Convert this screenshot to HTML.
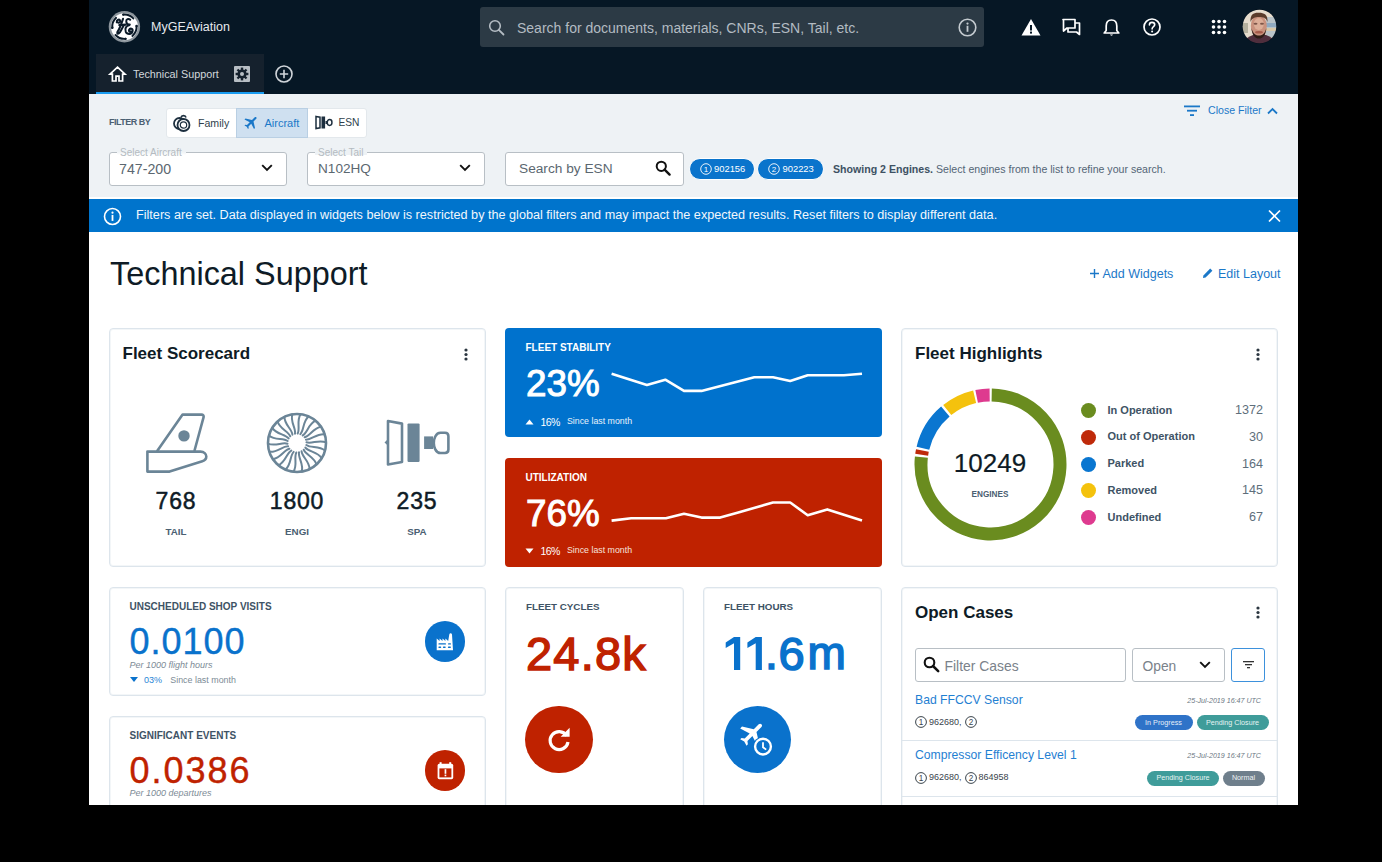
<!DOCTYPE html>
<html><head><meta charset="utf-8">
<style>
*{box-sizing:border-box;margin:0;padding:0}
html,body{width:1382px;height:862px;background:#000;overflow:hidden}
body{font-family:"Liberation Sans",sans-serif;position:relative}
.a{position:absolute;white-space:nowrap;line-height:1}
svg{position:absolute;overflow:visible}
.bg{position:absolute}
.ci{display:inline-block;width:11.5px;height:11.5px;border:1px solid #26323c;border-radius:50%;font-size:8.5px;line-height:9.5px;text-align:center;margin-right:1px;vertical-align:-2px}
.card{position:absolute;background:#fff;border:1px solid #dde5ec;border-radius:4px;box-shadow:inset 0 0 0 1px #f3f6f8}
</style></head>
<body>
<!-- backgrounds -->
<div class="bg" style="left:89px;top:0;width:1209px;height:805px;background:#fff"></div>
<div class="bg" style="left:89px;top:0;width:1209px;height:94px;background:#061725"></div>
<div class="bg" style="left:89px;top:94px;width:1209px;height:103px;background:#eef2f5"></div>
<div class="bg" style="left:89px;top:199px;width:1209px;height:33px;background:#0074cc"></div>

<!-- HEADER -->
<!-- GE logo -->
<svg style="left:104px;top:7px" width="40" height="40" viewBox="0 0 862 862">
<circle cx="440" cy="425" r="338" fill="#8d969d"/>
<circle cx="440" cy="425" r="290" fill="#fff"/>
<path d="M417 164 A262 262 0 0 1 632 246" stroke="#0b1a28" stroke-width="42" fill="none" stroke-linecap="round"/><circle cx="417" cy="164" r="26" fill="#0b1a28"/><path d="M702 411 A262 262 0 0 1 612 623" stroke="#0b1a28" stroke-width="42" fill="none" stroke-linecap="round"/><circle cx="702" cy="411" r="26" fill="#0b1a28"/><path d="M463 686 A262 262 0 0 1 248 604" stroke="#0b1a28" stroke-width="42" fill="none" stroke-linecap="round"/><circle cx="463" cy="686" r="26" fill="#0b1a28"/><path d="M179 448 A262 262 0 0 1 261 233" stroke="#0b1a28" stroke-width="42" fill="none" stroke-linecap="round"/><circle cx="179" cy="448" r="26" fill="#0b1a28"/>
<g fill="none" stroke="#0b1a28" stroke-width="44" stroke-linecap="round">
<path d="M275 330 C270 280 320 255 345 290 C365 320 330 350 300 330"/>
<path d="M410 255 C385 330 340 460 300 520 C265 575 300 600 345 540 C380 490 410 420 430 390"/>
<path d="M330 390 C380 385 420 385 470 380"/>
<path d="M565 275 C530 240 470 260 480 320 C490 370 530 380 555 378"/>
<path d="M545 392 C470 400 445 470 470 535 C495 595 600 600 615 525 C630 460 560 450 540 495 C528 525 555 545 575 525"/>
</g>
</svg>
<div class="a" id="myge" style="left:151px;top:21px;font-size:12.5px;color:#e6eaee">MyGEAviation</div>

<!-- search -->
<div class="bg" style="left:480px;top:7px;width:504px;height:40px;border-radius:3px;background:#2c3a45"></div>
<svg style="left:488px;top:19px" width="18" height="18" viewBox="0 0 18 18"><circle cx="7" cy="7" r="5.3" fill="none" stroke="#b4bcc3" stroke-width="1.6"/><line x1="10.8" y1="10.8" x2="15.5" y2="15.5" stroke="#b4bcc3" stroke-width="1.8" stroke-linecap="round"/></svg>
<div class="a" style="left:517px;top:21px;font-size:14px;color:#b3bbc2">Search for documents, materials, CNRs, ESN, Tail, etc.</div>
<svg style="left:958px;top:18px" width="19" height="19" viewBox="0 0 19 19"><circle cx="9.5" cy="9.5" r="8.3" fill="none" stroke="#c4cacf" stroke-width="1.6"/><circle cx="9.5" cy="5.6" r="1.1" fill="#c4cacf"/><rect x="8.6" y="7.8" width="1.8" height="6" fill="#c4cacf"/></svg>

<!-- right icons -->
<svg style="left:1021px;top:18px" width="20" height="18" viewBox="0 0 20 18"><path d="M10 1 L19.5 17.5 L0.5 17.5 Z" fill="#fff"/><rect x="9" y="7" width="2" height="5.5" fill="#061725"/><rect x="9" y="13.6" width="2" height="2" fill="#061725"/></svg>
<svg style="left:1062px;top:18px" width="19" height="18" viewBox="0 0 19 18"><path d="M1 1.5 H13 V10 H5 L1.5 13 V1.5 Z" fill="none" stroke="#fff" stroke-width="1.7" stroke-linejoin="round"/><path d="M13 5 H17.5 V16.5 L14.5 14 H6 V10" fill="none" stroke="#fff" stroke-width="1.7" stroke-linejoin="round"/></svg>
<svg style="left:1103px;top:18px" width="17" height="19" viewBox="0 0 17 19"><path d="M8.5 2 C5 2 3.2 4.6 3.2 8 V12.5 L1.2 15 H15.8 L13.8 12.5 V8 C13.8 4.6 12 2 8.5 2 Z" fill="none" stroke="#fff" stroke-width="1.7" stroke-linejoin="round"/><path d="M7 16.6 a1.6 1.6 0 0 0 3 0" fill="#fff"/></svg>
<svg style="left:1143px;top:18px" width="18" height="18" viewBox="0 0 18 18"><circle cx="9" cy="9" r="8" fill="none" stroke="#fff" stroke-width="1.7"/><path d="M6.4 7 C6.4 5.3 7.6 4.4 9 4.4 C10.5 4.4 11.7 5.4 11.7 6.8 C11.7 8.6 9.1 8.8 9.1 10.9" fill="none" stroke="#fff" stroke-width="1.6" stroke-linecap="round"/><circle cx="9.1" cy="13.4" r="1" fill="#fff"/></svg>
<svg style="left:1211px;top:19px" width="16" height="16" viewBox="0 0 16 16"><g fill="#fff"><circle cx="2.5" cy="2.5" r="1.8"/><circle cx="8" cy="2.5" r="1.8"/><circle cx="13.5" cy="2.5" r="1.8"/><circle cx="2.5" cy="8" r="1.8"/><circle cx="8" cy="8" r="1.8"/><circle cx="13.5" cy="8" r="1.8"/><circle cx="2.5" cy="13.5" r="1.8"/><circle cx="8" cy="13.5" r="1.8"/><circle cx="13.5" cy="13.5" r="1.8"/></g></svg>
<!-- avatar -->
<svg style="left:1242px;top:9.2px" width="35" height="35" viewBox="0 0 35 35">
 <defs><clipPath id="avc"><circle cx="17.5" cy="17.5" r="16.8"/></clipPath><filter id="avb" x="-20%" y="-20%" width="140%" height="140%"><feGaussianBlur stdDeviation="0.45"/></filter></defs>
 <circle cx="17.5" cy="17.5" r="17.3" fill="#02101c"/>
 <g clip-path="url(#avc)"><g filter="url(#avb)">
  <rect x="-2" y="-2" width="39" height="39" fill="#e6dccd"/>
  <rect x="24" y="8" width="13" height="20" fill="#b9c3c8"/>
  <rect x="24" y="14" width="13" height="4" fill="#8fa9c0"/>
  <rect x="24" y="19" width="13" height="3" fill="#d8c7a8"/>
  <rect x="1" y="14" width="5" height="10" fill="#b5b09e"/>
  <ellipse cx="17.5" cy="38" rx="17" ry="13" fill="#4f2f3c"/>
  <ellipse cx="16.8" cy="17" rx="8" ry="11" fill="#c9917d"/>
  <ellipse cx="16.8" cy="15" rx="5" ry="6" fill="#dcae98"/>
  <path d="M8.5 13 C8 5 12 3.5 17 3.8 C22 3.8 26 5.5 25.5 13 C24 8.5 21 8 17 8 C13 8 10 9 8.5 13Z" fill="#5a3a2c"/>
  <ellipse cx="13.5" cy="14.8" rx="2" ry="1" fill="#7d5548"/>
  <ellipse cx="20" cy="14.8" rx="2" ry="1" fill="#7d5548"/>
  <path d="M9.5 19 C10 27 13.5 29.5 17 29.5 C20.5 29.5 24 27 24.3 19 C23 25 20 26.5 17 26.5 C14 26.5 11 25 9.5 19Z" fill="#2e1d18"/>
  <ellipse cx="17" cy="23.3" rx="4" ry="1.3" fill="#a55a4a"/>
 </g></g>
</svg>

<!-- tab row -->
<div class="bg" style="left:96px;top:54px;width:168px;height:40px;background:#15212d"></div>
<div class="bg" style="left:96px;top:91.5px;width:168px;height:2.5px;background:#1a9cf0"></div>
<svg style="left:109px;top:66px" width="17" height="16" viewBox="0 0 17 16"><path d="M8.5 1.2 L16 8.2 H13.6 V15 H10 V10.2 H7 V15 H3.4 V8.2 H1 Z" fill="none" stroke="#fff" stroke-width="1.7" stroke-linejoin="miter"/></svg>
<div class="a" style="left:133px;top:69px;font-size:10.8px;color:#d3d8dc">Technical Support</div>
<svg style="left:234px;top:66px" width="16" height="16" viewBox="0 0 16 16"><rect x="0" y="0" width="16" height="16" rx="1" fill="#b8bec4"/><g transform="translate(8 8)"><circle r="4.6" fill="#15212d"/><g fill="#15212d"><rect x="-1.2" y="-6.4" width="2.4" height="12.8"/><rect x="-6.4" y="-1.2" width="12.8" height="2.4"/><rect x="-1.2" y="-6.4" width="2.4" height="12.8" transform="rotate(45)"/><rect x="-6.4" y="-1.2" width="12.8" height="2.4" transform="rotate(45)"/></g><circle r="2" fill="#b8bec4"/></g></svg>
<svg style="left:275px;top:65px" width="18" height="18" viewBox="0 0 18 18"><circle cx="9" cy="9" r="8" fill="none" stroke="#d0d5da" stroke-width="1.6"/><path d="M9 4.8 V13.2 M4.8 9 H13.2" stroke="#d0d5da" stroke-width="1.6"/></svg>


<!-- FILTER BAR -->
<div class="a" style="left:109px;top:118px;font-size:9px;font-weight:700;color:#4b6072;letter-spacing:-0.5px">FILTER BY</div>
<div class="bg" style="left:166px;top:107.5px;width:201px;height:30px;background:#fff;border:1px solid #e3e8ec;border-radius:3px"></div>
<div class="bg" style="left:236px;top:107.5px;width:72px;height:30px;background:#cfe0f0;border:1px solid #b9cfe3"></div>
<!-- family icon -->
<svg style="left:173px;top:113px" width="18" height="20" viewBox="0 0 18 20"><circle cx="6.5" cy="10.5" r="5.5" fill="none" stroke="#1d2f3f" stroke-width="1.8"/><circle cx="10.5" cy="12" r="6" fill="#fff" stroke="#1d2f3f" stroke-width="1.8"/><circle cx="10.5" cy="12" r="3.2" fill="none" stroke="#1d2f3f" stroke-width="1.2"/><path d="M8 4.5 C8.5 2 12.5 2 13 4.5" fill="none" stroke="#1d2f3f" stroke-width="1.6"/></svg>
<div class="a" style="left:198px;top:118px;font-size:10.6px;color:#2f3f4c">Family</div>
<!-- plane icon -->
<svg style="left:242.5px;top:113.5px" width="17" height="17" viewBox="0 0 24 24"><path fill="#1b78c8" d="M21 16v-2l-8-5V3.5c0-.83-.67-1.5-1.5-1.5S10 2.67 10 3.5V9l-8 5v2l8-2.5V19l-2 1.5V22l3.5-1 3.5 1v-1.5L13 19v-5.5l8 2.5z" transform="rotate(45 12 12)"/></svg>
<div class="a" style="left:264.5px;top:118px;font-size:11px;color:#1b78c8">Aircraft</div>
<!-- esn icon -->
<svg style="left:315px;top:115px" width="18" height="15" viewBox="0 0 18 15"><path d="M1 1.5 L5 2.2 V12.8 L1 13.5 Z" fill="none" stroke="#1d2f3f" stroke-width="1.5"/><rect x="6.5" y="1.5" width="3.6" height="12" fill="#1d2f3f"/><rect x="10.5" y="6" width="2" height="3" fill="#1d2f3f"/><rect x="12.3" y="4.6" width="4.6" height="5.8" rx="2.3" fill="none" stroke="#1d2f3f" stroke-width="1.5"/></svg>
<div class="a" style="left:338.5px;top:118px;font-size:10.2px;color:#2f3f4c">ESN</div>

<!-- close filter -->
<svg style="left:1184px;top:105px" width="16" height="12" viewBox="0 0 16 12"><rect x="0" y="0.5" width="16" height="1.8" fill="#1b78c8"/><rect x="3" y="4.8" width="10" height="1.8" fill="#1b78c8"/><rect x="6" y="9.2" width="4" height="1.8" fill="#1b78c8"/></svg>
<div class="a" style="left:1208px;top:105px;font-size:10.6px;color:#1b78c8">Close Filter</div>
<svg style="left:1267px;top:107px" width="11" height="8" viewBox="0 0 11 8"><path d="M1 6.5 L5.5 2 L10 6.5" fill="none" stroke="#1b78c8" stroke-width="1.8"/></svg>

<!-- selects -->
<div class="bg" style="left:109px;top:152px;width:178px;height:34px;background:#fff;border:1px solid #b8bfc5;border-radius:3px"></div>
<div class="bg" style="left:117px;top:147px;width:69px;height:8px;background:#eef2f5"></div>
<div class="bg" style="left:117px;top:152px;width:69px;height:3px;background:linear-gradient(#eef2f5,#fff)"></div>
<div class="a" style="left:120px;top:148px;font-size:10px;color:#b4bbc1">Select Aircraft</div>
<div class="a" style="left:119px;top:162px;font-size:14.2px;color:#5b6770">747-200</div>
<svg style="left:261px;top:164px" width="12" height="8" viewBox="0 0 12 8"><path d="M1.2 1.2 L6 6 L10.8 1.2" fill="none" stroke="#111" stroke-width="1.9"/></svg>

<div class="bg" style="left:307px;top:152px;width:178px;height:34px;background:#fff;border:1px solid #b8bfc5;border-radius:3px"></div>
<div class="bg" style="left:315px;top:147px;width:52px;height:8px;background:#eef2f5"></div>
<div class="a" style="left:318px;top:148px;font-size:10px;color:#b4bbc1">Select Tail</div>
<div class="a" style="left:318px;top:162px;font-size:13.6px;color:#5b6770">N102HQ</div>
<svg style="left:459px;top:164px" width="12" height="8" viewBox="0 0 12 8"><path d="M1.2 1.2 L6 6 L10.8 1.2" fill="none" stroke="#111" stroke-width="1.9"/></svg>

<!-- esn search -->
<div class="bg" style="left:505px;top:152px;width:179px;height:34px;background:#fff;border:1px solid #b8bfc5;border-radius:3px"></div>
<div class="a" style="left:519px;top:162px;font-size:13.7px;color:#5b6770">Search by ESN</div>
<svg style="left:655px;top:160px" width="16" height="16" viewBox="0 0 16 16"><circle cx="6.3" cy="6.3" r="4.6" fill="none" stroke="#111" stroke-width="2"/><line x1="9.6" y1="9.6" x2="14.6" y2="14.6" stroke="#111" stroke-width="2.4" stroke-linecap="round"/></svg>

<!-- chips -->
<div class="bg" style="left:689px;top:157.5px;width:66px;height:22px;border-radius:11px;background:#0a74cc;border:1px solid #fff"></div>
<svg style="left:700px;top:163px" width="12" height="12" viewBox="0 0 12 12"><circle cx="6" cy="6" r="5.3" fill="none" stroke="#fff" stroke-width="0.9"/><text x="6" y="9" font-size="8" text-anchor="middle" fill="#fff" font-family="Liberation Sans">1</text></svg>
<div class="a" style="left:714px;top:163.8px;font-size:9.4px;color:#fff">902156</div>
<div class="bg" style="left:757px;top:157.5px;width:67px;height:22px;border-radius:11px;background:#0a74cc;border:1px solid #fff"></div>
<svg style="left:768px;top:163px" width="12" height="12" viewBox="0 0 12 12"><circle cx="6" cy="6" r="5.3" fill="none" stroke="#fff" stroke-width="0.9"/><text x="6" y="9" font-size="8" text-anchor="middle" fill="#fff" font-family="Liberation Sans">2</text></svg>
<div class="a" style="left:782.5px;top:163.8px;font-size:9.4px;color:#fff">902223</div>

<div class="a" style="left:833px;top:163.5px;font-size:10.6px;color:#3d5163"><b style="font-weight:700">Showing 2 Engines.</b> <span style="color:#536575">Select engines from the list to refine your search.</span></div>

<!-- BANNER -->
<svg style="left:103px;top:207px" width="19" height="19" viewBox="0 0 19 19"><circle cx="9.5" cy="9.5" r="8" fill="none" stroke="#fff" stroke-width="1.6"/><circle cx="9.5" cy="5.7" r="1.1" fill="#fff"/><rect x="8.6" y="7.9" width="1.8" height="6" fill="#fff"/></svg>
<div class="a" style="left:136px;top:209px;font-size:12.65px;color:#f2f7fc">Filters are set. Data displayed in widgets below is restricted by the global filters and may impact the expected results. Reset filters to display different data.</div>
<svg style="left:1267px;top:209px" width="14" height="14" viewBox="0 0 14 14"><path d="M2 1.5 L13 12.5 M13 1.5 L2 12.5" stroke="#fff" stroke-width="1.7"/></svg>

<!-- TITLE -->
<div class="a" style="left:110px;top:258px;font-size:32.4px;color:#0e1b26">Technical Support</div>
<svg style="left:1089.5px;top:268.5px" width="9" height="9" viewBox="0 0 9 9"><path d="M4.5 0 V9 M0 4.5 H9" stroke="#1b78c8" stroke-width="1.4"/></svg><div class="a" style="left:1102.5px;top:268px;font-size:12.5px;color:#1b78c8">Add Widgets</div>
<svg style="left:1202px;top:267px" width="12" height="12" viewBox="0 0 12 12"><path d="M1 11 L1.4 8.4 L8.2 1.6 L10.4 3.8 L3.6 10.6 Z" fill="#1b78c8"/></svg>
<div class="a" style="left:1218px;top:268px;font-size:12.5px;color:#1b78c8">Edit Layout</div>


<!-- ROW 1 -->
<div class="card" style="left:109px;top:328px;width:377px;height:239px"></div>
<div class="a" style="left:122.5px;top:345px;font-size:17px;font-weight:700;color:#0e1b26">Fleet Scorecard</div>
<svg style="left:464px;top:348px" width="4" height="13" viewBox="0 0 4 13"><circle cx="2" cy="2" r="1.6" fill="#2b3640"/><circle cx="2" cy="6.5" r="1.6" fill="#2b3640"/><circle cx="2" cy="11" r="1.6" fill="#2b3640"/></svg>
<!-- tail icon -->
<svg style="left:145px;top:412px" width="64" height="62" viewBox="0 0 64 62"><g fill="none" stroke="#6b8597" stroke-width="2.6" stroke-linejoin="round"><path d="M12 39.3 L37.6 2.6 H56.5 C58 2.6 59 3.8 58.6 5.2 L49.4 39"/><path d="M2.4 39.6 H55.5 C59 39.6 61.3 42 61.3 44.6 C61.3 47 59.6 48.6 57.3 49.3 L24.6 59.6 H2.4 Z"/></g><circle cx="39" cy="23.9" r="5.7" fill="#6b8597"/></svg>
<!-- fan icon -->
<svg style="left:266.4px;top:412px" width="62" height="62" viewBox="0 0 62 62"><circle cx="31" cy="31" r="29" fill="none" stroke="#6b8597" stroke-width="2.6"/><path d="M31.66 21.52 C34.37 16.38 30.23 9.01 34.53 2.22 M34.31 22.09 C38.36 17.93 36.46 9.69 42.50 4.38 M36.68 23.39 C41.74 20.53 42.24 12.09 49.53 8.70 M38.60 25.29 C44.26 23.98 47.11 16.02 55.07 14.82 M39.90 27.67 C45.70 28.00 50.68 21.17 58.65 22.26 M40.47 30.31 C45.95 32.26 52.65 27.11 59.99 30.40 M40.29 33.00 C44.99 36.42 52.87 33.37 58.99 38.59 M39.35 35.54 C42.89 40.14 51.32 39.44 55.71 46.17 M37.73 37.71 C39.84 43.12 48.12 44.82 50.44 52.52 M35.57 39.33 C36.06 45.12 43.53 49.08 43.59 57.13 M33.03 40.28 C31.88 45.97 37.93 51.88 35.72 59.61 M30.34 40.48 C27.63 45.62 31.77 52.99 27.47 59.78 M27.69 39.91 C23.64 44.07 25.54 52.31 19.50 57.62 M25.32 38.61 C20.26 41.47 19.76 49.91 12.47 53.30 M23.40 36.71 C17.74 38.02 14.89 45.98 6.93 47.18 M22.10 34.33 C16.30 34.00 11.32 40.83 3.35 39.74 M21.53 31.69 C16.05 29.74 9.35 34.89 2.01 31.60 M21.71 29.00 C17.01 25.58 9.13 28.63 3.01 23.41 M22.65 26.46 C19.11 21.86 10.68 22.56 6.29 15.83 M24.27 24.29 C22.16 18.88 13.88 17.18 11.56 9.48 M26.43 22.67 C25.94 16.88 18.47 12.92 18.41 4.87 M28.97 21.72 C30.12 16.03 24.07 10.12 26.28 2.39 " fill="none" stroke="#6b8597" stroke-width="2" stroke-linecap="round"/></svg>
<!-- spa icon -->
<svg style="left:383px;top:418px" width="69" height="50" viewBox="0 0 69 50"><path d="M5 3 L19 5.6 V44 L5 46.5 Z" fill="none" stroke="#6b8597" stroke-width="2.6" stroke-linejoin="round"/><path d="M4.5 21.6 L1.5 24.4 L4.5 27.2 Z" fill="#6b8597"/><rect x="24.5" y="5.4" width="12.1" height="38.6" rx="1.2" fill="#6b8597"/><rect x="41.1" y="18.4" width="9" height="12.6" fill="#6b8597"/><path d="M57.5 14.8 H62 Q65.4 14.8 65.4 18.2 V31.6 Q65.4 35 62 35 H57.5 C52.5 35 50.8 28.5 50.8 24.9 C50.8 21.3 52.5 14.8 57.5 14.8 Z" fill="none" stroke="#6b8597" stroke-width="2.6"/></svg>
<div class="a" style="left:116px;top:490px;width:120px;text-align:center;font-size:23px;letter-spacing:0.8px;color:#0e1b26;-webkit-text-stroke:0.5px #0e1b26">768</div>
<div class="a" style="left:237px;top:490px;width:120px;text-align:center;font-size:23px;letter-spacing:0.8px;color:#0e1b26;-webkit-text-stroke:0.5px #0e1b26">1800</div>
<div class="a" style="left:357px;top:490px;width:120px;text-align:center;font-size:23px;letter-spacing:0.8px;color:#0e1b26;-webkit-text-stroke:0.5px #0e1b26">235</div>
<div class="a" style="left:116px;top:527px;width:120px;text-align:center;font-size:9.8px;font-weight:700;color:#4b6072">TAIL</div>
<div class="a" style="left:237px;top:527px;width:120px;text-align:center;font-size:9.8px;font-weight:700;color:#4b6072">ENGI</div>
<div class="a" style="left:357px;top:527px;width:120px;text-align:center;font-size:9.8px;font-weight:700;color:#4b6072">SPA</div>

<!-- fleet stability -->
<div class="bg" style="left:505px;top:328px;width:377px;height:109px;background:#0072cd;border-radius:4px"></div>
<div class="a" style="left:525.5px;top:343px;font-size:10px;font-weight:700;color:#fff">FLEET STABILITY</div>
<div class="a" style="left:526px;top:366px;font-size:36.8px;color:#fff;-webkit-text-stroke:1px #fff">23%</div>
<svg style="left:0;top:0" width="1382" height="862"><polyline points="611.6,373.7 646.9,384.9 665.3,379.7 684.0,390.9 701.5,390.9 754.3,377.3 773.0,377.3 790.2,380.9 807.7,375.2 843.9,375.2 862.0,373.7" fill="none" stroke="#fff" stroke-width="2.6" stroke-linejoin="round"/></svg>
<svg style="left:525px;top:419px" width="9" height="6" viewBox="0 0 9 6"><path d="M0.5 5.5 L4.5 0.5 L8.5 5.5 Z" fill="#fff"/></svg>
<div class="a" style="left:540.5px;top:416.5px;font-size:10.5px;color:#fff;letter-spacing:-0.6px">16%</div>
<div class="a" style="left:567px;top:416.5px;font-size:8.8px;color:#e8f1fa">Since last month</div>

<!-- utilization -->
<div class="bg" style="left:505px;top:458px;width:377px;height:109px;background:#bf2200;border-radius:4px"></div>
<div class="a" style="left:525.5px;top:472.5px;font-size:10px;font-weight:700;color:#fff">UTILIZATION</div>
<div class="a" style="left:526px;top:496px;font-size:36.8px;color:#fff;-webkit-text-stroke:1px #fff">76%</div>
<svg style="left:0;top:0" width="1382" height="862"><polyline points="611.6,520.6 631.2,518.2 665.9,518.2 684.0,513.7 701.5,517.6 720.2,517.6 738.3,512.5 773.0,502.5 790.2,502.5 807.7,515.2 827.3,509.4 862.0,520.6" fill="none" stroke="#fff" stroke-width="2.6" stroke-linejoin="round"/></svg>
<svg style="left:525px;top:548px" width="9" height="6" viewBox="0 0 9 6"><path d="M0.5 0.5 L4.5 5.5 L8.5 0.5 Z" fill="#fff"/></svg>
<div class="a" style="left:540.5px;top:546px;font-size:10.5px;color:#fff;letter-spacing:-0.6px">16%</div>
<div class="a" style="left:567px;top:546px;font-size:8.8px;color:#f6e3de">Since last month</div>

<!-- fleet highlights -->
<div class="card" style="left:901px;top:328px;width:377px;height:239px"></div>
<div class="a" style="left:915px;top:345px;font-size:17px;font-weight:700;color:#0e1b26">Fleet Highlights</div>
<svg style="left:1256px;top:348px" width="4" height="13" viewBox="0 0 4 13"><circle cx="2" cy="2" r="1.6" fill="#2b3640"/><circle cx="2" cy="6.5" r="1.6" fill="#2b3640"/><circle cx="2" cy="11" r="1.6" fill="#2b3640"/></svg>
<svg style="left:0;top:0" width="1382" height="862"><path d="M991.71 394.91 A69.5 69.5 0 1 1 921.38 457.14" stroke="#6a8c1f" stroke-width="13" fill="none"/><path d="M921.68 454.73 A69.5 69.5 0 0 1 922.40 450.54" stroke="#bf2a0a" stroke-width="13" fill="none"/><path d="M922.92 448.18 A69.5 69.5 0 0 1 945.36 411.55" stroke="#0a76d0" stroke-width="13" fill="none"/><path d="M947.24 410.01 A69.5 69.5 0 0 1 974.63 396.74" stroke="#f4c20d" stroke-width="13" fill="none"/><path d="M976.64 396.30 A69.5 69.5 0 0 1 989.65 394.91" stroke="#de3a8f" stroke-width="13" fill="none"/></svg>
<div class="a" style="left:940px;top:449.5px;width:100px;text-align:center;font-size:26px;color:#0e1b26;-webkit-text-stroke:0.2px #0e1b26">10249</div>
<div class="a" style="left:940px;top:491px;width:100px;text-align:center;font-size:8.2px;font-weight:700;color:#4b6072">ENGINES</div>
<div class="bg" style="left:1080.5px;top:403.00px;width:15px;height:15px;border-radius:50%;background:#6a8c1f"></div>
<div class="a" style="left:1107.5px;top:404.50px;font-size:11px;font-weight:700;color:#3e5365">In Operation</div>
<div class="a" style="left:1163px;top:404.00px;width:100px;text-align:right;font-size:12.6px;color:#5e6e7b">1372</div>
<div class="bg" style="left:1080.5px;top:429.75px;width:15px;height:15px;border-radius:50%;background:#bf2a0a"></div>
<div class="a" style="left:1107.5px;top:431.25px;font-size:11px;font-weight:700;color:#3e5365">Out of Operation</div>
<div class="a" style="left:1163px;top:430.75px;width:100px;text-align:right;font-size:12.6px;color:#5e6e7b">30</div>
<div class="bg" style="left:1080.5px;top:456.50px;width:15px;height:15px;border-radius:50%;background:#0a76d0"></div>
<div class="a" style="left:1107.5px;top:458.00px;font-size:11px;font-weight:700;color:#3e5365">Parked</div>
<div class="a" style="left:1163px;top:457.50px;width:100px;text-align:right;font-size:12.6px;color:#5e6e7b">164</div>
<div class="bg" style="left:1080.5px;top:483.25px;width:15px;height:15px;border-radius:50%;background:#f4c20d"></div>
<div class="a" style="left:1107.5px;top:484.75px;font-size:11px;font-weight:700;color:#3e5365">Removed</div>
<div class="a" style="left:1163px;top:484.25px;width:100px;text-align:right;font-size:12.6px;color:#5e6e7b">145</div>
<div class="bg" style="left:1080.5px;top:510.00px;width:15px;height:15px;border-radius:50%;background:#de3a8f"></div>
<div class="a" style="left:1107.5px;top:511.50px;font-size:11px;font-weight:700;color:#3e5365">Undefined</div>
<div class="a" style="left:1163px;top:511.00px;width:100px;text-align:right;font-size:12.6px;color:#5e6e7b">67</div>

<!-- ROW 2 -->
<div class="card" style="left:109px;top:587px;width:377px;height:109px"></div>
<div class="a" style="left:129.5px;top:601.5px;font-size:10px;font-weight:700;color:#3e5365">UNSCHEDULED SHOP VISITS</div>
<div class="a" style="left:129.5px;top:624px;font-size:36px;color:#0a72cc;letter-spacing:1px;-webkit-text-stroke:0.4px #0a72cc">0.0100</div>
<div class="a" style="left:129.5px;top:660.7px;font-size:9px;font-style:italic;color:#7d8b96">Per 1000 flight hours</div>
<svg style="left:130px;top:677px" width="8" height="5" viewBox="0 0 8 5"><path d="M0 0 L8 0 L4 5 Z" fill="#0a72cc"/></svg>
<div class="a" style="left:144px;top:675.5px;font-size:9px;color:#2a86d6">03%</div>
<div class="a" style="left:170.3px;top:675.5px;font-size:8.9px;color:#7d8b96">Since last month</div>
<div class="bg" style="left:424.7px;top:621.1px;width:40.6px;height:40.6px;border-radius:50%;background:#0a72cc"></div>
<svg style="left:435.5px;top:632.5px" width="18" height="18" viewBox="0 0 18 18"><path d="M0.7 17.3 V5.6 L3.6 8 V5.6 L6.5 8 V5.6 L9.4 8 V5.6 L12.2 8 L13.3 1.4 Q13.6 0.3 14.6 0.3 Q15.7 0.3 16 1.4 L17 17.3 Z" fill="#fff"/><g fill="#0a72cc"><rect x="2.4" y="10.3" width="7.6" height="1.3" rx="0.6"/><rect x="12" y="10.3" width="3" height="1.3" rx="0.6"/><rect x="2.4" y="13.6" width="2.8" height="1.3" rx="0.6"/><rect x="6.9" y="13.6" width="2.8" height="1.3" rx="0.6"/><rect x="11.9" y="13.6" width="3" height="1.3" rx="0.6"/></g></svg>

<div class="card" style="left:109px;top:716px;width:377px;height:120px"></div>
<div class="a" style="left:129.5px;top:730.5px;font-size:10px;font-weight:700;color:#3e5365">SIGNIFICANT EVENTS</div>
<div class="a" style="left:129.5px;top:753px;font-size:36px;color:#bf2200;letter-spacing:2px;-webkit-text-stroke:0.4px #bf2200">0.0386</div>
<div class="a" style="left:129.5px;top:789px;font-size:9px;font-style:italic;color:#7d8b96">Per 1000 departures</div>
<div class="bg" style="left:424.7px;top:750.1px;width:40.6px;height:40.6px;border-radius:50%;background:#bf2200"></div>
<svg style="left:437px;top:762px" width="17" height="18" viewBox="0 0 17 18"><rect x="0.6" y="1.8" width="15.6" height="15.4" rx="1.6" fill="#fff"/><rect x="2.4" y="6.4" width="12" height="9" fill="#bf2200"/><rect x="7.6" y="7.2" width="1.7" height="4.6" fill="#fff"/><rect x="7.6" y="12.6" width="1.7" height="1.7" fill="#fff"/><rect x="2.6" y="0.2" width="2" height="2.5" fill="#fff"/><rect x="12.2" y="0.2" width="2" height="2.5" fill="#fff"/></svg>

<div class="card" style="left:505px;top:587px;width:179px;height:250px"></div>
<div class="a" style="left:526px;top:601.5px;font-size:9.8px;font-weight:700;color:#3e5365">FLEET CYCLES</div>
<div class="a" style="left:526px;top:629.5px;font-size:47px;color:#bf2200;letter-spacing:1.2px;-webkit-text-stroke:1.4px #bf2200">24.8k</div>
<div class="bg" style="left:525.4px;top:705.8px;width:67.2px;height:67.2px;border-radius:50%;background:#bf2200"></div>
<svg style="left:545px;top:725px" width="29" height="29" viewBox="0 0 29 29"><path d="M21.6 10.6 A9 9 0 1 0 23 17" fill="none" stroke="#fff" stroke-width="3.2"/><path d="M15.6 11.7 L24.6 11.7 L24.6 2.7 Z" fill="#fff"/></svg>

<div class="card" style="left:703px;top:587px;width:179px;height:250px"></div>
<div class="a" style="left:724px;top:601.5px;font-size:9.8px;font-weight:700;color:#3e5365">FLEET HOURS</div>
<svg style="left:0;top:0" width="1382" height="862"><path d="M734.0 637 H740.2 V670 H734.0 V643.2 L725.7 648 V642.6 Z" fill="#0a72cc"/><path d="M755.7 637 H761.9 V670 H755.7 V643.2 L747.4 648 V642.6 Z" fill="#0a72cc"/></svg><div class="a" style="left:765px;top:630px;font-size:46px;color:#0a72cc;-webkit-text-stroke:1.6px #0a72cc">.</div><div class="a" style="left:778.5px;top:630px;font-size:47px;color:#0a72cc;-webkit-text-stroke:1.6px #0a72cc">6</div><div class="a" style="left:807.5px;top:630px;font-size:46px;color:#0a72cc;-webkit-text-stroke:1.6px #0a72cc">m</div>
<div class="bg" style="left:723.8px;top:705.8px;width:67.2px;height:67.2px;border-radius:50%;background:#0a72cc"></div>
<svg style="left:736px;top:716px" width="44" height="44" viewBox="0 0 44 44"><path fill="#fff" d="M21 16v-2l-8-5V3.5c0-.83-.67-1.5-1.5-1.5S10 2.67 10 3.5V9l-8 5v2l8-2.5V19l-2 1.5V22l3.5-1 3.5 1v-1.5L13 19v-5.5l8 2.5z" transform="translate(1.5 2.5) scale(1.28) rotate(45 12 12)"/><circle cx="27" cy="30.6" r="10.2" fill="#0a72cc"/><circle cx="27" cy="30.6" r="7.9" fill="none" stroke="#fff" stroke-width="2.4"/><path d="M27 26.3 V31.2 L30.2 33.6" fill="none" stroke="#fff" stroke-width="1.8"/></svg>

<!-- open cases -->
<div class="card" style="left:901px;top:587px;width:377px;height:250px"></div>
<div class="a" style="left:915px;top:603.5px;font-size:17px;font-weight:700;color:#0e1b26">Open Cases</div>
<svg style="left:1256px;top:606px" width="4" height="13" viewBox="0 0 4 13"><circle cx="2" cy="2" r="1.6" fill="#2b3640"/><circle cx="2" cy="6.5" r="1.6" fill="#2b3640"/><circle cx="2" cy="11" r="1.6" fill="#2b3640"/></svg>
<div class="bg" style="left:915px;top:648px;width:211px;height:34px;background:#fff;border:1px solid #b8bfc5;border-radius:3px"></div>
<svg style="left:923px;top:656px" width="17" height="17" viewBox="0 0 17 17"><circle cx="6.5" cy="6.5" r="4.8" fill="none" stroke="#111" stroke-width="2.1"/><line x1="10" y1="10" x2="15.2" y2="15.2" stroke="#111" stroke-width="2.5" stroke-linecap="round"/></svg>
<div class="a" style="left:944.5px;top:659.5px;font-size:13.9px;color:#7a828a">Filter Cases</div>
<div class="bg" style="left:1132px;top:648px;width:93px;height:34px;background:#fff;border:1px solid #b8bfc5;border-radius:3px"></div>
<div class="a" style="left:1142.5px;top:659.5px;font-size:13.8px;color:#7a828a">Open</div>
<svg style="left:1199px;top:661px" width="12" height="8" viewBox="0 0 12 8"><path d="M1.2 1.2 L6 6 L10.8 1.2" fill="none" stroke="#111" stroke-width="1.9"/></svg>
<div class="bg" style="left:1231px;top:648px;width:34px;height:34px;background:#fff;border:1.5px solid #3d91dc;border-radius:3px"></div>
<svg style="left:1243px;top:661px" width="11" height="8" viewBox="0 0 11 8"><rect x="0" y="0" width="11" height="1.3" fill="#333"/><rect x="2" y="3" width="7" height="1.3" fill="#333"/><rect x="4" y="6" width="3" height="1.3" fill="#333"/></svg>

<div class="a" style="left:915px;top:694px;font-size:12.2px;color:#1f80d2">Bad FFCCV Sensor</div>
<div class="a" style="left:1161px;top:697.5px;width:100px;text-align:right;font-size:7.1px;font-style:italic;color:#6b7883">25-Jul-2019 16:47 UTC</div>
<svg style="left:915px;top:716.4px" width="12" height="12" viewBox="0 0 12 12"><circle cx="6" cy="6" r="5.4" fill="none" stroke="#3a444c" stroke-width="1"/><text x="6" y="9" font-size="8.2" text-anchor="middle" fill="#3a444c" font-family="Liberation Sans">1</text></svg><div class="a" style="left:929px;top:717.5px;font-size:9px;color:#3a444c">962680,</div><svg style="left:964.8px;top:716.4px" width="12" height="12" viewBox="0 0 12 12"><circle cx="6" cy="6" r="5.4" fill="none" stroke="#3a444c" stroke-width="1"/><text x="6" y="9" font-size="8.2" text-anchor="middle" fill="#3a444c" font-family="Liberation Sans">2</text></svg>
<div class="bg" style="left:1134.5px;top:715px;width:58px;height:15px;border-radius:8px;background:#2f73c8"></div>
<div class="a" style="left:1134.5px;top:718.5px;width:58px;text-align:center;font-size:7.2px;color:#e6eef8">In Progress</div>
<div class="bg" style="left:1196.5px;top:715px;width:72px;height:15px;border-radius:8px;background:#3f9c9a"></div>
<div class="a" style="left:1196.5px;top:718.5px;width:72px;text-align:center;font-size:7.2px;color:#e6f4f3">Pending Closure</div>
<div class="bg" style="left:902px;top:739.5px;width:375px;height:1px;background:#dde5ec"></div>

<div class="a" style="left:915px;top:748.5px;font-size:12.2px;color:#1f80d2">Compressor Efficency Level 1</div>
<div class="a" style="left:1161px;top:752.5px;width:100px;text-align:right;font-size:7.1px;font-style:italic;color:#6b7883">25-Jul-2019 16:47 UTC</div>
<svg style="left:915px;top:771.5px" width="12" height="12" viewBox="0 0 12 12"><circle cx="6" cy="6" r="5.4" fill="none" stroke="#3a444c" stroke-width="1"/><text x="6" y="9" font-size="8.2" text-anchor="middle" fill="#3a444c" font-family="Liberation Sans">1</text></svg><div class="a" style="left:929px;top:772.6px;font-size:9px;color:#3a444c">962680,</div><svg style="left:964.8px;top:771.5px" width="12" height="12" viewBox="0 0 12 12"><circle cx="6" cy="6" r="5.4" fill="none" stroke="#3a444c" stroke-width="1"/><text x="6" y="9" font-size="8.2" text-anchor="middle" fill="#3a444c" font-family="Liberation Sans">2</text></svg><div class="a" style="left:978.4px;top:772.6px;font-size:9px;color:#3a444c">864958</div>
<div class="bg" style="left:1147px;top:770.5px;width:72px;height:15px;border-radius:8px;background:#3f9c9a"></div>
<div class="a" style="left:1147px;top:774px;width:72px;text-align:center;font-size:7.2px;color:#e6f4f3">Pending Closure</div>
<div class="bg" style="left:1222.5px;top:770.5px;width:42px;height:15px;border-radius:8px;background:#6f7f8c"></div>
<div class="a" style="left:1222.5px;top:774px;width:42px;text-align:center;font-size:7.2px;color:#eef1f4">Normal</div>
<div class="bg" style="left:902px;top:795.5px;width:375px;height:1px;background:#dde5ec"></div>

<!-- bottom black strip -->
<div class="bg" style="left:0;top:805px;width:1382px;height:57px;background:#000"></div>

</body></html>
